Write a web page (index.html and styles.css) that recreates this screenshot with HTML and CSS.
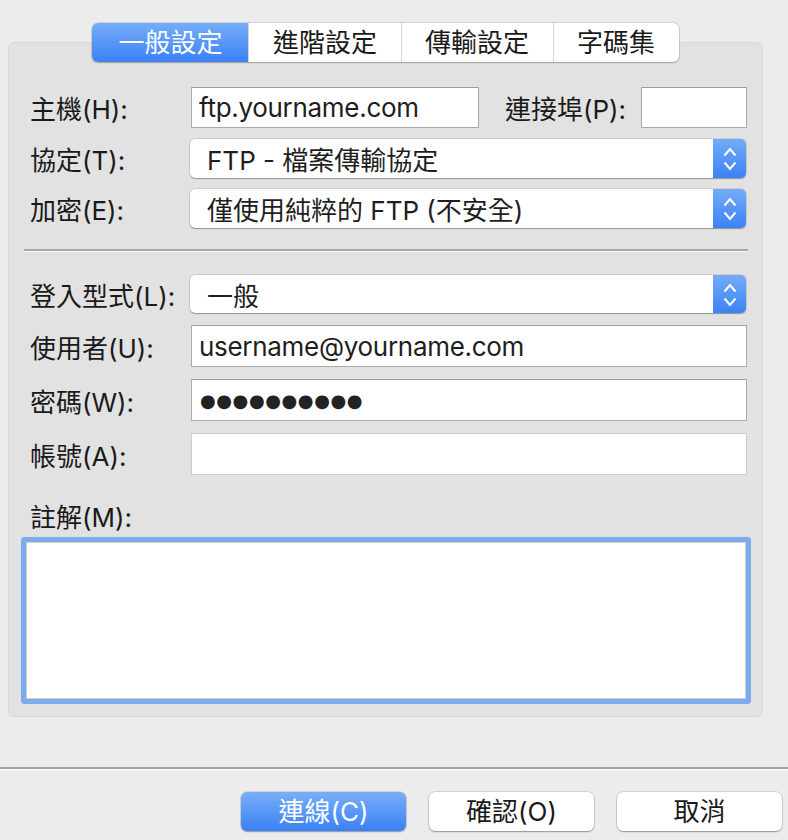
FILE: index.html
```html
<!DOCTYPE html>
<html lang="zh-Hant">
<head>
<meta charset="utf-8">
<title>FTP 設定</title>
<link rel="stylesheet" href="styles.css">
</head>
<body>
<div class="dialog">
  <div class="tabs-row">
    <div class="tabs">
      <div class="tab active">一般設定</div>
      <div class="tab">進階設定</div>
      <div class="tab">傳輸設定</div>
      <div class="tab">字碼集</div>
    </div>
  </div>
  <div class="panel">
    <div class="form">
      <div class="label">主機(H):</div>
      <div class="field host-row">
        <div class="input host">ftp.yourname.com</div>
        <div class="label port-label">連接埠(P):</div>
        <div class="input port"></div>
      </div>

      <div class="label">協定(T):</div>
      <div class="field">
        <div class="select">
          <span class="select-text">FTP - 檔案傳輸協定</span>
          <span class="stepper"><svg width="14" height="26" viewBox="0 0 14 26"><polyline points="1.5,9.5 7,3 12.5,9.5" fill="none" stroke="#fff" stroke-width="2"/><polyline points="1.5,16.5 7,23 12.5,16.5" fill="none" stroke="#fff" stroke-width="2"/></svg></span>
        </div>
      </div>

      <div class="label">加密(E):</div>
      <div class="field">
        <div class="select">
          <span class="select-text">僅使用純粹的 FTP (不安全)</span>
          <span class="stepper"><svg width="14" height="26" viewBox="0 0 14 26"><polyline points="1.5,9.5 7,3 12.5,9.5" fill="none" stroke="#fff" stroke-width="2"/><polyline points="1.5,16.5 7,23 12.5,16.5" fill="none" stroke="#fff" stroke-width="2"/></svg></span>
        </div>
      </div>
    </div>

    <div class="separator inner"></div>

    <div class="form second">
      <div class="label">登入型式(L):</div>
      <div class="field">
        <div class="select short">
          <span class="select-text">一般</span>
          <span class="stepper"><svg width="14" height="26" viewBox="0 0 14 26"><polyline points="1.5,9.5 7,3 12.5,9.5" fill="none" stroke="#fff" stroke-width="2"/><polyline points="1.5,16.5 7,23 12.5,16.5" fill="none" stroke="#fff" stroke-width="2"/></svg></span>
        </div>
      </div>

      <div class="label">使用者(U):</div>
      <div class="field"><div class="input tall">username@yourname.com</div></div>

      <div class="label">密碼(W):</div>
      <div class="field"><div class="input tall dots">●●●●●●●●●●</div></div>

      <div class="label">帳號(A):</div>
      <div class="field"><div class="input tall light"></div></div>
    </div>

    <div class="label note-label">註解(M):</div>
    <div class="textarea"></div>
  </div>

  <div class="separator outer"></div>

  <div class="buttons">
    <div class="button default">連線(C)</div>
    <div class="button">確認(O)</div>
    <div class="button">取消</div>
  </div>
</div>
</body>
</html>
```
FILE: styles.css
```css
* { box-sizing: border-box; }
html, body {
  margin: 0;
  padding: 0;
  background: #ececec;
}
body {
  width: 788px;
  height: 840px;
  overflow: hidden;
  font-family: Inter, "Noto Sans CJK TC", sans-serif;
  font-size: 26px;
  color: #1a1a1a;
}
.dialog {
  padding-top: 23px;
}
.tabs-row {
  display: flex;
  justify-content: center;
  margin: 0 25px -20px 8px;
  position: relative;
  z-index: 1;
}
.tabs {
  display: flex;
  height: 39px;
  background: #fff;
  border-radius: 6px;
  box-shadow: 0 0 0 1px rgba(0,0,0,0.10), 0 1px 1.5px rgba(0,0,0,0.22);
  overflow: hidden;
}
.tab {
  display: flex;
  align-items: center;
  padding: 0 23.5px;
  line-height: 1;
  border-left: 1px solid #d6d6d6;
  color: #1a1a1a;
}
.tab:first-child { border-left: none; }
.tab.active {
  background: linear-gradient(#74acf8, #3b82f7);
  color: #fff;
  padding: 0 26px;
}
.panel {
  margin: 0 25px 0 8px;
  height: 675px;
  background: #e2e2e2;
  border: 1px solid #d9d9d9;
  border-radius: 6px;
  padding: 44px 15px 0 21px;
}
.form {
  display: grid;
  grid-template-columns: 161px 1fr;
  row-gap: 11px;
}
.form.second { row-gap: 12px; }
.label {
  display: flex;
  align-items: center;
  white-space: nowrap;
  color: #1a1a1a;
}
.field { display: flex; align-items: center; }
.host-row { height: 41px; }
.input {
  height: 41px;
  background: #fff;
  border: 1px solid #ababab;
  border-top-color: #9d9d9d;
  padding: 0 7px;
  display: flex;
  align-items: center;
  white-space: nowrap;
  color: #1e1e1e;
  width: 100%;
  letter-spacing: -0.3px;
}
.input.host { width: 288px; flex: none; }
.port-label { margin-left: 26px; }
.input.port { width: 106px; flex: none; margin-left: auto; }
.input.tall { height: 42px; }
.input.light { border-color: #cccccc; }
.input.dots {
  font-family: "DejaVu Sans", sans-serif;
  font-size: 18px;
  letter-spacing: 0.6px;
  padding-left: 8px;
  color: #222;
}
.select {
  position: relative;
  width: 100%;
  height: 39px;
  margin-left: -1px;
  background: #fff;
  border-radius: 5px;
  box-shadow: 0 0 0 0.5px rgba(0,0,0,0.18), 0 1px 1px rgba(0,0,0,0.28);
  display: flex;
  align-items: center;
  overflow: hidden;
}
.select.short { height: 38px; }
.select-text {
  flex: 1;
  padding-left: 17px;
  white-space: nowrap;
  color: #1e1e1e;
}
.stepper {
  width: 33px;
  align-self: stretch;
  background: linear-gradient(#74acf8, #3b82f7);
  display: flex;
  align-items: center;
  justify-content: center;
}
.stepper svg { display: block; margin-top: 1px; }
.separator.inner {
  margin: 21px 0 23px -6px;
  width: 724px;
  height: 3px;
  border-top: 2px solid #a9a9a9;
  border-bottom: 1px solid #f6f6f6;
}
.note-label {
  height: 30px;
  margin-top: 25px;
}
.textarea {
  margin: 12px 0 0 -4px;
  width: 720px;
  height: 157px;
  background: #fff;
  border: 1px solid #cfcfcf;
  box-shadow: 0 0 0 5px #7eaaee;
  border-radius: 1px;
}
.separator.outer {
  margin-top: 50px;
  height: 3px;
  border-top: 2px solid #a3a3a3;
  border-bottom: 1px solid #fafafa;
}
.buttons {
  display: flex;
  justify-content: flex-end;
  gap: 23px;
  padding-right: 6px;
  margin-top: 22px;
}
.button {
  width: 165px;
  height: 39px;
  background: #fff;
  border-radius: 6px;
  box-shadow: 0 0 0 0.5px rgba(0,0,0,0.2), 0 1px 1.5px rgba(0,0,0,0.3);
  display: flex;
  align-items: center;
  justify-content: center;
  color: #1a1a1a;
  line-height: 1;
}
.button.default {
  background: linear-gradient(#79aff8, #3a80f6);
  color: #fff;
}
```
